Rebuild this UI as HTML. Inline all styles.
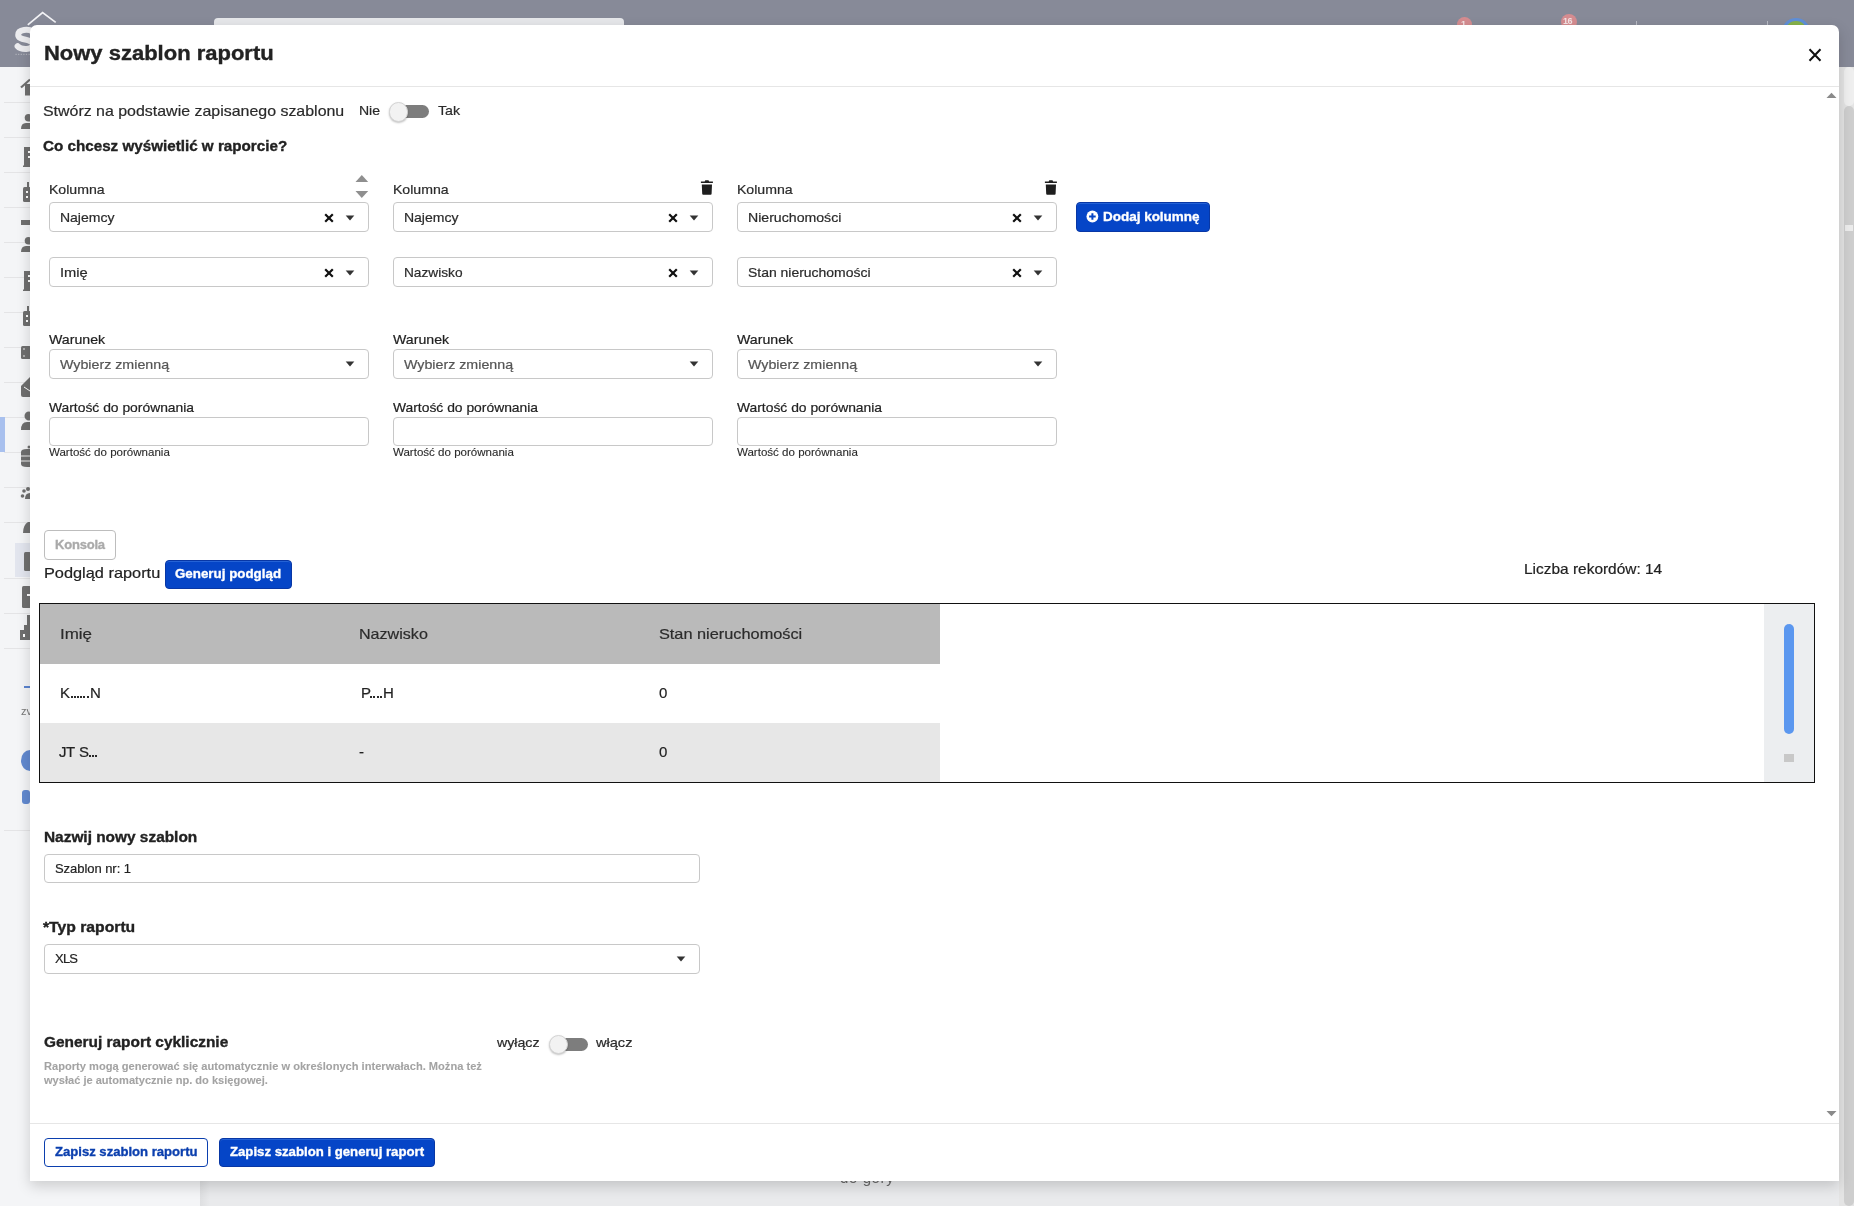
<!DOCTYPE html>
<html><head><meta charset="utf-8"><title>Nowy szablon raportu</title>
<style>
html,body{margin:0;padding:0;}
body{width:1854px;height:1206px;position:relative;overflow:hidden;background:#e7e8ea;font-family:"Liberation Sans",sans-serif;}
.a{position:absolute;box-sizing:border-box;}
.t{position:absolute;white-space:pre;font-family:"Liberation Sans",sans-serif;will-change:transform;}
.sel{position:absolute;box-sizing:border-box;border:1px solid #c9c9c9;border-radius:4px;background:#fff;}
.tri{position:absolute;width:0;height:0;border-left:4.5px solid transparent;border-right:4.5px solid transparent;border-top:5px solid #333;}
</style></head><body>
<div class="a" style="left:0px;top:0px;width:1854px;height:67px;background:#878a98"></div>
<div class="a" style="left:0px;top:67px;width:200px;height:1139px;background:#f4f5f7"></div>
<div class="a" style="left:200px;top:67px;width:1654px;height:1139px;background:#e9eaec"></div>
<div class="a" style="left:200px;top:67px;width:10px;height:1139px;background:linear-gradient(90deg,#dedfe1,#e9eaec)"></div>
<div class="a" style="left:214px;top:18px;width:410px;height:20px;background:#e6e7ea;border-radius:4px"></div>
<div class="a" style="left:1457px;top:17px;width:15px;height:15px;background:#d58c90;border-radius:50%"></div>
<div class="a" style="left:1561px;top:14px;width:16px;height:16px;background:#d58c90;border-radius:50%"></div>
<div class="t" style="left:1563px;top:17px;font-size:9px;line-height:9px;color:#f4e4e5;font-weight:700;letter-spacing:-0.5px">16</div>
<div class="t" style="left:1461px;top:20px;font-size:9px;line-height:9px;color:#f4e4e5;font-weight:700">1</div>
<div class="a" style="left:1636px;top:21px;width:1px;height:5px;background:#b9bbc4"></div>
<div class="a" style="left:1767px;top:21px;width:1px;height:5px;background:#b9bbc4"></div>
<div class="a" style="left:1782px;top:18px;width:28px;height:28px;background:#86b24a;border-radius:50%;border:3px solid #5f8fd8"></div>
<svg class="a" style="left:0;top:0" width="60" height="67"><path d="M27.8 24.8 L42.6 12.6 L55.7 22.4" stroke="#f3f3f6" stroke-width="1.7" fill="none"/><path d="M32.5 31.5 C29 29, 18.2 28.8, 18.2 35 C18.2 40.8, 32.8 38.6, 32.8 44.6 C32.8 50.2, 21 50, 17.6 46.2" stroke="#ececef" stroke-width="6" fill="none" stroke-linecap="round"/><path d="M15.5 54.3 H30" stroke="#d0d1d6" stroke-width="0.7" stroke-dasharray="1.2 1.4"/></svg>
<div class="a" style="left:4px;top:102px;width:26px;height:1px;background:#e4e4e6"></div>
<div class="a" style="left:4px;top:137px;width:26px;height:1px;background:#e4e4e6"></div>
<div class="a" style="left:4px;top:172px;width:26px;height:1px;background:#e4e4e6"></div>
<div class="a" style="left:4px;top:207px;width:26px;height:1px;background:#e4e4e6"></div>
<div class="a" style="left:4px;top:242px;width:26px;height:1px;background:#e4e4e6"></div>
<div class="a" style="left:4px;top:277px;width:26px;height:1px;background:#e4e4e6"></div>
<div class="a" style="left:4px;top:312px;width:26px;height:1px;background:#e4e4e6"></div>
<div class="a" style="left:4px;top:347px;width:26px;height:1px;background:#e4e4e6"></div>
<div class="a" style="left:4px;top:382px;width:26px;height:1px;background:#e4e4e6"></div>
<div class="a" style="left:4px;top:417px;width:26px;height:1px;background:#e4e4e6"></div>
<div class="a" style="left:4px;top:452px;width:26px;height:1px;background:#e4e4e6"></div>
<div class="a" style="left:4px;top:487px;width:26px;height:1px;background:#e4e4e6"></div>
<div class="a" style="left:4px;top:522px;width:26px;height:1px;background:#e4e4e6"></div>
<div class="a" style="left:4px;top:578px;width:26px;height:1px;background:#e4e4e6"></div>
<div class="a" style="left:4px;top:613px;width:26px;height:1px;background:#e4e4e6"></div>
<div class="a" style="left:4px;top:648px;width:26px;height:1px;background:#e4e4e6"></div>
<div class="a" style="left:4px;top:830px;width:26px;height:1px;background:#e4e4e6"></div>
<div class="a" style="left:0px;top:417px;width:5px;height:35px;background:#a8c0ee"></div>
<div class="a" style="left:15px;top:543px;width:15px;height:34px;background:#e2e5ee"></div>
<svg class="a" style="left:0;top:0" width="31" height="830"><path d="M21 87.5 L30 79.5" stroke="#6f6f6f" stroke-width="2.2"/><rect x="25" y="84" width="6" height="11.5" fill="#6f6f6f"/><circle cx="28.5" cy="117.8" r="3.8" fill="#6f6f6f"/><path d="M21 129 Q21 123 26 123 H31 V129 Z" fill="#6f6f6f"/><circle cx="28.5" cy="240.8" r="3.8" fill="#6f6f6f"/><path d="M21 252 Q21 246 26 246 H31 V252 Z" fill="#6f6f6f"/><path d="M23 167 V165.5 H24 V147 H31 V167 Z" fill="#6f6f6f"/><rect x="28" y="151" width="3" height="2" fill="#fff"/><rect x="28" y="156" width="3" height="2" fill="#fff"/><path d="M23 291 V289.5 H24 V271 H31 V291 Z" fill="#6f6f6f"/><rect x="28" y="275" width="3" height="2" fill="#fff"/><rect x="28" y="280" width="3" height="2" fill="#fff"/><rect x="23" y="187" width="8" height="15" rx="1.5" fill="#6f6f6f"/><rect x="27" y="182" width="2" height="5" fill="#6f6f6f"/><rect x="26" y="191" width="2" height="2" fill="#fff"/><rect x="26" y="196" width="2" height="2" fill="#fff"/><rect x="23" y="311" width="8" height="15" rx="1.5" fill="#6f6f6f"/><rect x="27" y="306" width="2" height="5" fill="#6f6f6f"/><rect x="26" y="315" width="2" height="2" fill="#fff"/><rect x="26" y="320" width="2" height="2" fill="#fff"/><rect x="21" y="220" width="10" height="5" fill="#6f6f6f"/><rect x="21" y="346" width="10" height="13" rx="1.5" fill="#6f6f6f"/><circle cx="24" cy="349" r="0.8" fill="#fff"/><circle cx="24" cy="356" r="0.8" fill="#fff"/><path d="M21 386 L30 377 V397 H23 Q21 397 21 395 Z" fill="#6f6f6f"/><path d="M24 387 L30 391" stroke="#fff" stroke-width="1"/><circle cx="29" cy="416" r="4.5" fill="#6f6f6f"/><path d="M21 430 Q21 422 27 422 H31 V430 Z" fill="#6f6f6f"/><path d="M21 452 Q21 449 27 449 H31 V467 H27 Q21 467 21 464 Z" fill="#6f6f6f"/><path d="M21 456 H31 M21 461 H31" stroke="#eee" stroke-width="1"/><circle cx="29" cy="447" r="1.5" fill="#6f6f6f"/><circle cx="24" cy="491" r="1.8" fill="#6f6f6f"/><circle cx="22.5" cy="496" r="1.8" fill="#6f6f6f"/><circle cx="28" cy="489" r="2" fill="#6f6f6f"/><path d="M25 499 Q25 493 30 493 V499 Z" fill="#6f6f6f"/><path d="M23 533 Q23 525 28 522 H31 V533 Z" fill="#6f6f6f"/><rect x="24" y="552" width="7" height="19" rx="1.5" fill="#6f6f6f"/><rect x="22" y="586" width="9" height="22" rx="1.5" fill="#6f6f6f"/><rect x="27" y="594" width="4" height="2" fill="#fff"/><path d="M20 640 V630 H24 V625 H27 V615 H31 V640 Z" fill="#6f6f6f"/><rect x="23" y="634" width="2" height="3" fill="#fff"/></svg>
<div class="a" style="left:24px;top:686px;width:6px;height:2px;background:#5b84d0"></div>
<div class="t" style="left:21px;top:706px;font-size:11px;line-height:11px;color:#777">zv</div>
<div class="a" style="left:21px;top:750px;width:18px;height:21px;background:#6189d0;border-radius:50%"></div>
<div class="a" style="left:22px;top:790px;width:8px;height:14px;background:#6189d0;border-radius:3px"></div>
<div class="t" style="left:840px;top:1170px;font-size:15px;line-height:15px;color:#6a6a6a;letter-spacing:0.6px">do góry</div>
<div class="a" style="left:1839px;top:67px;width:15px;height:1139px;background:#e4e4e4"></div>
<div class="a" style="left:1844px;top:67px;width:10px;height:39px;background:#efefef;border-radius:5px"></div>
<div class="a" style="left:1844px;top:106px;width:10px;height:1100px;background:#cecece;border-radius:5px"></div>
<div class="a" style="left:1845px;top:225px;width:8px;height:6px;background:#ececec"></div>
<div class="a" style="left:30px;top:25px;width:1809px;height:1156px;background:#fff;border-radius:7px 7px 0 0;box-shadow:0 5px 14px rgba(0,0,0,0.17)"></div>
<div class="a" style="left:30px;top:86px;width:1809px;height:1px;background:#e6e6e6"></div>
<div class="a" style="left:30px;top:1123px;width:1809px;height:1px;background:#e6e6e6"></div>
<svg class="a" style="left:1808px;top:48px" width="14" height="14"><path d="M1.5 1.3 L12.5 12.7 M12.5 1.3 L1.5 12.7" stroke="#111" stroke-width="2"/></svg>
<svg class="a" style="left:1826px;top:92px" width="11" height="7"><path d="M0.5 6 L5.5 0.8 L10.5 6 Z" fill="#8a8a8a"/></svg>
<svg class="a" style="left:1826px;top:1110px" width="11" height="7"><path d="M0.5 1 L5.5 6.2 L10.5 1 Z" fill="#8a8a8a"/></svg>
<div class="a" style="left:390px;top:105px;width:39px;height:13px;background:#7d7d7d;border-radius:6.5px"></div>
<div class="a" style="left:388.5px;top:102px;width:19.5px;height:19.5px;background:#f2f2f2;border:1px solid #d4d4d4;border-radius:50%;box-shadow:0 1px 2px rgba(0,0,0,0.25)"></div>
<div class="a" style="left:550px;top:1038px;width:38px;height:13px;background:#7d7d7d;border-radius:6.5px"></div>
<div class="a" style="left:548.5px;top:1034.5px;width:19.5px;height:19.5px;background:#f2f2f2;border:1px solid #d4d4d4;border-radius:50%;box-shadow:0 1px 2px rgba(0,0,0,0.25)"></div>
<svg class="a" style="left:355px;top:174px" width="14" height="25"><path d="M0.5 8 L6.8 1 L13.2 8 Z" fill="#8f8f8f"/><path d="M0.5 17 L6.8 24 L13.2 17 Z" fill="#8f8f8f"/></svg>
<svg class="a" style="left:700px;top:180px" width="14" height="16"><path d="M0.9 1.4 h3.8 l0.6 -1.1 h3.2 l0.6 1.1 h3.8 v1.7 h-12 Z" fill="#1e1e1e"/><path d="M1.8 4.4 h10.2 l-0.4 9.4 a1 1 0 0 1 -1 1 h-7.4 a1 1 0 0 1 -1 -1 Z" fill="#1e1e1e"/></svg>
<svg class="a" style="left:1044px;top:180px" width="14" height="16"><path d="M0.9 1.4 h3.8 l0.6 -1.1 h3.2 l0.6 1.1 h3.8 v1.7 h-12 Z" fill="#1e1e1e"/><path d="M1.8 4.4 h10.2 l-0.4 9.4 a1 1 0 0 1 -1 1 h-7.4 a1 1 0 0 1 -1 -1 Z" fill="#1e1e1e"/></svg>
<div class="a" style="left:49px;top:202px;width:320px;height:30px;border:1px solid #c8c8c8;border-radius:4px;background:#fff"></div>
<svg class="a" style="left:323.5px;top:212.5px" width="10" height="10"><path d="M1.2 1.2 L8.8 8.8 M8.8 1.2 L1.2 8.8" stroke="#111" stroke-width="2.2"/></svg>
<svg class="a" style="left:345px;top:214.5px" width="10" height="6"><path d="M0.7 0.5 L9.3 0.5 L5 5.5 Z" fill="#333"/></svg>
<div class="a" style="left:49px;top:257px;width:320px;height:30px;border:1px solid #c8c8c8;border-radius:4px;background:#fff"></div>
<svg class="a" style="left:323.5px;top:267.5px" width="10" height="10"><path d="M1.2 1.2 L8.8 8.8 M8.8 1.2 L1.2 8.8" stroke="#111" stroke-width="2.2"/></svg>
<svg class="a" style="left:345px;top:269.5px" width="10" height="6"><path d="M0.7 0.5 L9.3 0.5 L5 5.5 Z" fill="#333"/></svg>
<div class="a" style="left:49px;top:349px;width:320px;height:30px;border:1px solid #c8c8c8;border-radius:4px;background:#fff"></div>
<svg class="a" style="left:344.5px;top:361.3px" width="10" height="6"><path d="M0.7 0.5 L9.3 0.5 L5 5.5 Z" fill="#333"/></svg>
<div class="a" style="left:49px;top:417px;width:320px;height:29px;border:1px solid #c8c8c8;border-radius:4px;background:#fff"></div>
<div class="a" style="left:393px;top:202px;width:320px;height:30px;border:1px solid #c8c8c8;border-radius:4px;background:#fff"></div>
<svg class="a" style="left:667.5px;top:212.5px" width="10" height="10"><path d="M1.2 1.2 L8.8 8.8 M8.8 1.2 L1.2 8.8" stroke="#111" stroke-width="2.2"/></svg>
<svg class="a" style="left:689px;top:214.5px" width="10" height="6"><path d="M0.7 0.5 L9.3 0.5 L5 5.5 Z" fill="#333"/></svg>
<div class="a" style="left:393px;top:257px;width:320px;height:30px;border:1px solid #c8c8c8;border-radius:4px;background:#fff"></div>
<svg class="a" style="left:667.5px;top:267.5px" width="10" height="10"><path d="M1.2 1.2 L8.8 8.8 M8.8 1.2 L1.2 8.8" stroke="#111" stroke-width="2.2"/></svg>
<svg class="a" style="left:689px;top:269.5px" width="10" height="6"><path d="M0.7 0.5 L9.3 0.5 L5 5.5 Z" fill="#333"/></svg>
<div class="a" style="left:393px;top:349px;width:320px;height:30px;border:1px solid #c8c8c8;border-radius:4px;background:#fff"></div>
<svg class="a" style="left:688.5px;top:361.3px" width="10" height="6"><path d="M0.7 0.5 L9.3 0.5 L5 5.5 Z" fill="#333"/></svg>
<div class="a" style="left:393px;top:417px;width:320px;height:29px;border:1px solid #c8c8c8;border-radius:4px;background:#fff"></div>
<div class="a" style="left:737px;top:202px;width:320px;height:30px;border:1px solid #c8c8c8;border-radius:4px;background:#fff"></div>
<svg class="a" style="left:1011.5px;top:212.5px" width="10" height="10"><path d="M1.2 1.2 L8.8 8.8 M8.8 1.2 L1.2 8.8" stroke="#111" stroke-width="2.2"/></svg>
<svg class="a" style="left:1033px;top:214.5px" width="10" height="6"><path d="M0.7 0.5 L9.3 0.5 L5 5.5 Z" fill="#333"/></svg>
<div class="a" style="left:737px;top:257px;width:320px;height:30px;border:1px solid #c8c8c8;border-radius:4px;background:#fff"></div>
<svg class="a" style="left:1011.5px;top:267.5px" width="10" height="10"><path d="M1.2 1.2 L8.8 8.8 M8.8 1.2 L1.2 8.8" stroke="#111" stroke-width="2.2"/></svg>
<svg class="a" style="left:1033px;top:269.5px" width="10" height="6"><path d="M0.7 0.5 L9.3 0.5 L5 5.5 Z" fill="#333"/></svg>
<div class="a" style="left:737px;top:349px;width:320px;height:30px;border:1px solid #c8c8c8;border-radius:4px;background:#fff"></div>
<svg class="a" style="left:1032.5px;top:361.3px" width="10" height="6"><path d="M0.7 0.5 L9.3 0.5 L5 5.5 Z" fill="#333"/></svg>
<div class="a" style="left:737px;top:417px;width:320px;height:29px;border:1px solid #c8c8c8;border-radius:4px;background:#fff"></div>
<div class="a" style="left:1076px;top:202px;width:134px;height:30px;background:#0545c7;border:1px solid #0837a5;border-radius:4px;box-shadow:inset 0 1px 0 #2462d6"></div>
<svg class="a" style="left:1086px;top:210px" width="13" height="13"><circle cx="6.4" cy="6.5" r="5.9" fill="#fff"/><path d="M6.4 3.2 V9.8 M3.1 6.5 H9.7" stroke="#0545c5" stroke-width="2"/></svg>
<div class="a" style="left:44px;top:530px;width:72px;height:30px;border:1px solid #bdbdbd;border-radius:4px;background:#fff"></div>
<div class="a" style="left:165px;top:560px;width:127px;height:29px;background:#0545c7;border:1px solid #0837a5;border-radius:4px;box-shadow:inset 0 1px 0 #2462d6"></div>
<div class="a" style="left:39px;top:603px;width:1776px;height:180px;border:1px solid #111;background:#fff"></div>
<div class="a" style="left:40px;top:604px;width:900px;height:60px;background:#bababa"></div>
<div class="a" style="left:40px;top:723px;width:900px;height:59px;background:#e7e7e7"></div>
<div class="a" style="left:1764px;top:604px;width:50px;height:178px;background:#eceef0"></div>
<div class="a" style="left:1784px;top:624px;width:10px;height:110px;background:#5b97ef;border-radius:5px"></div>
<div class="a" style="left:1784px;top:754px;width:10px;height:8px;background:#c8c8c8"></div>
<div class="a" style="left:70.6px;top:695.8px;width:2.1px;height:2.1px;background:#2a2a2a"></div>
<div class="a" style="left:73.8px;top:695.8px;width:2.1px;height:2.1px;background:#2a2a2a"></div>
<div class="a" style="left:77.0px;top:695.8px;width:2.1px;height:2.1px;background:#2a2a2a"></div>
<div class="a" style="left:80.2px;top:695.8px;width:2.1px;height:2.1px;background:#2a2a2a"></div>
<div class="a" style="left:83.4px;top:695.8px;width:2.1px;height:2.1px;background:#2a2a2a"></div>
<div class="a" style="left:86.6px;top:695.8px;width:2.1px;height:2.1px;background:#2a2a2a"></div>
<div class="a" style="left:370.3px;top:695.8px;width:2.1px;height:2.1px;background:#2a2a2a"></div>
<div class="a" style="left:373.4px;top:695.8px;width:2.1px;height:2.1px;background:#2a2a2a"></div>
<div class="a" style="left:376.5px;top:695.8px;width:2.1px;height:2.1px;background:#2a2a2a"></div>
<div class="a" style="left:379.6px;top:695.8px;width:2.1px;height:2.1px;background:#2a2a2a"></div>
<div class="a" style="left:88.6px;top:754.5999999999999px;width:2.1px;height:2.1px;background:#2a2a2a"></div>
<div class="a" style="left:91.7px;top:754.5999999999999px;width:2.1px;height:2.1px;background:#2a2a2a"></div>
<div class="a" style="left:94.8px;top:754.5999999999999px;width:2.1px;height:2.1px;background:#2a2a2a"></div>
<div class="a" style="left:44px;top:854px;width:656px;height:29px;border:1px solid #c8c8c8;border-radius:4px;background:#fff"></div>
<div class="a" style="left:44px;top:944px;width:656px;height:30px;border:1px solid #c8c8c8;border-radius:4px;background:#fff"></div>
<svg class="a" style="left:675.5px;top:955.8px" width="10" height="6"><path d="M0.7 0.5 L9.3 0.5 L5 5.5 Z" fill="#333"/></svg>
<div class="a" style="left:44px;top:1138px;width:164px;height:29px;border:1px solid #0b3fae;border-radius:4px;background:#fff"></div>
<div class="a" style="left:219px;top:1138px;width:216px;height:29px;background:#0545c7;border:1px solid #0837a5;border-radius:4px;box-shadow:inset 0 1px 0 #2462d6"></div>
<div class="t" style="left:43.8px;top:43.4px;font-size:20px;line-height:20px;font-weight:700;color:#222;letter-spacing:0.00px;-webkit-text-stroke:0.35px #222;transform:scaleX(1.0998);transform-origin:0.80px 0;">Nowy szablon raportu</div>
<div class="t" style="left:43.4px;top:102.8px;font-size:15px;line-height:15px;font-weight:400;color:#2a2a2a;letter-spacing:0.00px;-webkit-text-stroke:0.2px #2a2a2a;transform:scaleX(1.0626);transform-origin:0.60px 0;">Stwórz na podstawie zapisanego szablonu</div>
<div class="t" style="left:358.5px;top:104.3px;font-size:13px;line-height:13px;font-weight:400;color:#2b2b2b;letter-spacing:0.00px;-webkit-text-stroke:0.2px #2b2b2b;transform:scaleX(1.0825);transform-origin:0.52px 0;">Nie</div>
<div class="t" style="left:437.5px;top:104.3px;font-size:13px;line-height:13px;font-weight:400;color:#2b2b2b;letter-spacing:0.00px;-webkit-text-stroke:0.2px #2b2b2b;transform:scaleX(1.0941);transform-origin:0.52px 0;">Tak</div>
<div class="t" style="left:43.4px;top:138.0px;font-size:15px;line-height:15px;font-weight:700;color:#222;letter-spacing:0.00px;-webkit-text-stroke:0.35px #222;transform:scaleX(1.0136);transform-origin:0.60px 0;">Co chcesz wyświetlić w raporcie?</div>
<div class="t" style="left:48.9px;top:183.0px;font-size:13px;line-height:13px;font-weight:400;color:#2b2b2b;letter-spacing:0.00px;-webkit-text-stroke:0.2px #2b2b2b;transform:scaleX(1.0861);transform-origin:0.52px 0;">Kolumna</div>
<div class="t" style="left:392.9px;top:183.0px;font-size:13px;line-height:13px;font-weight:400;color:#2b2b2b;letter-spacing:0.00px;-webkit-text-stroke:0.2px #2b2b2b;transform:scaleX(1.0861);transform-origin:0.52px 0;">Kolumna</div>
<div class="t" style="left:736.9px;top:183.0px;font-size:13px;line-height:13px;font-weight:400;color:#2b2b2b;letter-spacing:0.00px;-webkit-text-stroke:0.2px #2b2b2b;transform:scaleX(1.0861);transform-origin:0.52px 0;">Kolumna</div>
<div class="t" style="left:59.8px;top:211.0px;font-size:13px;line-height:13px;font-weight:400;color:#2b2b2b;letter-spacing:0.00px;-webkit-text-stroke:0.2px #2b2b2b;transform:scaleX(1.0780);transform-origin:0.52px 0;">Najemcy</div>
<div class="t" style="left:403.8px;top:211.0px;font-size:13px;line-height:13px;font-weight:400;color:#2b2b2b;letter-spacing:0.00px;-webkit-text-stroke:0.2px #2b2b2b;transform:scaleX(1.0780);transform-origin:0.52px 0;">Najemcy</div>
<div class="t" style="left:747.8px;top:211.0px;font-size:13px;line-height:13px;font-weight:400;color:#2b2b2b;letter-spacing:0.00px;-webkit-text-stroke:0.2px #2b2b2b;transform:scaleX(1.0866);transform-origin:0.52px 0;">Nieruchomości</div>
<div class="t" style="left:59.7px;top:266.1px;font-size:13px;line-height:13px;font-weight:400;color:#2b2b2b;letter-spacing:0.00px;-webkit-text-stroke:0.2px #2b2b2b;transform:scaleX(1.1308);transform-origin:0.52px 0;">Imię</div>
<div class="t" style="left:403.7px;top:266.1px;font-size:13px;line-height:13px;font-weight:400;color:#2b2b2b;letter-spacing:0.00px;-webkit-text-stroke:0.2px #2b2b2b;transform:scaleX(1.0534);transform-origin:0.52px 0;">Nazwisko</div>
<div class="t" style="left:747.7px;top:266.1px;font-size:13px;line-height:13px;font-weight:400;color:#2b2b2b;letter-spacing:0.00px;-webkit-text-stroke:0.2px #2b2b2b;transform:scaleX(1.0740);transform-origin:0.52px 0;">Stan nieruchomości</div>
<div class="t" style="left:49.0px;top:332.8px;font-size:13px;line-height:13px;font-weight:400;color:#222;letter-spacing:0.00px;-webkit-text-stroke:0.2px #222;transform:scaleX(1.0890);transform-origin:0.52px 0;">Warunek</div>
<div class="t" style="left:60.0px;top:357.6px;font-size:13px;line-height:13px;font-weight:400;color:#555;letter-spacing:0.00px;-webkit-text-stroke:0.2px #555;transform:scaleX(1.0958);transform-origin:0.52px 0;">Wybierz zmienną</div>
<div class="t" style="left:49.0px;top:400.7px;font-size:13px;line-height:13px;font-weight:400;color:#222;letter-spacing:0.00px;-webkit-text-stroke:0.2px #222;transform:scaleX(1.0662);transform-origin:0.52px 0;">Wartość do porównania</div>
<div class="t" style="left:49.1px;top:447.8px;font-size:10px;line-height:10px;font-weight:400;color:#2b2b2b;letter-spacing:0.00px;-webkit-text-stroke:0.1px #2b2b2b;transform:scaleX(1.1551);transform-origin:0.40px 0;">Wartość do porównania</div>
<div class="t" style="left:393.0px;top:332.8px;font-size:13px;line-height:13px;font-weight:400;color:#222;letter-spacing:0.00px;-webkit-text-stroke:0.2px #222;transform:scaleX(1.0890);transform-origin:0.52px 0;">Warunek</div>
<div class="t" style="left:404.0px;top:357.6px;font-size:13px;line-height:13px;font-weight:400;color:#555;letter-spacing:0.00px;-webkit-text-stroke:0.2px #555;transform:scaleX(1.0958);transform-origin:0.52px 0;">Wybierz zmienną</div>
<div class="t" style="left:393.0px;top:400.7px;font-size:13px;line-height:13px;font-weight:400;color:#222;letter-spacing:0.00px;-webkit-text-stroke:0.2px #222;transform:scaleX(1.0662);transform-origin:0.52px 0;">Wartość do porównania</div>
<div class="t" style="left:393.1px;top:447.8px;font-size:10px;line-height:10px;font-weight:400;color:#2b2b2b;letter-spacing:0.00px;-webkit-text-stroke:0.1px #2b2b2b;transform:scaleX(1.1551);transform-origin:0.40px 0;">Wartość do porównania</div>
<div class="t" style="left:737.0px;top:332.8px;font-size:13px;line-height:13px;font-weight:400;color:#222;letter-spacing:0.00px;-webkit-text-stroke:0.2px #222;transform:scaleX(1.0890);transform-origin:0.52px 0;">Warunek</div>
<div class="t" style="left:748.0px;top:357.6px;font-size:13px;line-height:13px;font-weight:400;color:#555;letter-spacing:0.00px;-webkit-text-stroke:0.2px #555;transform:scaleX(1.0958);transform-origin:0.52px 0;">Wybierz zmienną</div>
<div class="t" style="left:737.0px;top:400.7px;font-size:13px;line-height:13px;font-weight:400;color:#222;letter-spacing:0.00px;-webkit-text-stroke:0.2px #222;transform:scaleX(1.0662);transform-origin:0.52px 0;">Wartość do porównania</div>
<div class="t" style="left:737.1px;top:447.8px;font-size:10px;line-height:10px;font-weight:400;color:#2b2b2b;letter-spacing:0.00px;-webkit-text-stroke:0.1px #2b2b2b;transform:scaleX(1.1551);transform-origin:0.40px 0;">Wartość do porównania</div>
<div class="t" style="left:55.0px;top:538.2px;font-size:13px;line-height:13px;font-weight:700;color:#aaa;letter-spacing:-0.21px;-webkit-text-stroke:0.35px #aaa;">Konsola</div>
<div class="t" style="left:44.2px;top:565.4px;font-size:15px;line-height:15px;font-weight:400;color:#222;letter-spacing:0.00px;-webkit-text-stroke:0.2px #222;transform:scaleX(1.0895);transform-origin:0.60px 0;">Podgląd raportu</div>
<div class="t" style="left:175.0px;top:567.1px;font-size:13px;line-height:13px;font-weight:700;color:#fff;letter-spacing:-0.00px;-webkit-text-stroke:0.35px #fff;transform:scaleX(1.0268);transform-origin:0.52px 0;">Generuj podgląd</div>
<div class="t" style="left:1524.1px;top:561.3px;font-size:15px;line-height:15px;font-weight:400;color:#222;letter-spacing:-0.00px;-webkit-text-stroke:0.2px #222;transform:scaleX(1.0297);transform-origin:0.60px 0;">Liczba rekordów: 14</div>
<div class="t" style="left:59.8px;top:625.7px;font-size:15px;line-height:15px;font-weight:400;color:#2b2b2b;letter-spacing:0.00px;-webkit-text-stroke:0.2px #2b2b2b;transform:scaleX(1.1310);transform-origin:0.60px 0;">Imię</div>
<div class="t" style="left:359.4px;top:625.7px;font-size:15px;line-height:15px;font-weight:400;color:#2b2b2b;letter-spacing:0.00px;-webkit-text-stroke:0.2px #2b2b2b;transform:scaleX(1.0732);transform-origin:0.60px 0;">Nazwisko</div>
<div class="t" style="left:659.4px;top:625.7px;font-size:15px;line-height:15px;font-weight:400;color:#2b2b2b;letter-spacing:0.00px;-webkit-text-stroke:0.2px #2b2b2b;transform:scaleX(1.0878);transform-origin:0.60px 0;">Stan nieruchomości</div>
<div class="t" style="left:60.4px;top:685.3px;font-size:15px;line-height:15px;font-weight:400;color:#222;letter-spacing:-0.02px;-webkit-text-stroke:0.2px #222;">K</div>
<div class="t" style="left:90.0px;top:685.3px;font-size:15px;line-height:15px;font-weight:400;color:#222;letter-spacing:-0.84px;-webkit-text-stroke:0.2px #222;">N</div>
<div class="t" style="left:360.5px;top:685.3px;font-size:15px;line-height:15px;font-weight:400;color:#222;letter-spacing:-0.62px;-webkit-text-stroke:0.2px #222;">P</div>
<div class="t" style="left:383.3px;top:685.3px;font-size:15px;line-height:15px;font-weight:400;color:#222;letter-spacing:-1.04px;-webkit-text-stroke:0.2px #222;">H</div>
<div class="t" style="left:659.4px;top:685.3px;font-size:15px;line-height:15px;font-weight:400;color:#222;letter-spacing:1.86px;-webkit-text-stroke:0.2px #222;">0</div>
<div class="t" style="left:59.4px;top:744.1px;font-size:15px;line-height:15px;font-weight:400;color:#222;letter-spacing:-0.47px;-webkit-text-stroke:0.2px #222;">JT</div>
<div class="t" style="left:79.1px;top:744.1px;font-size:15px;line-height:15px;font-weight:400;color:#222;letter-spacing:-1.12px;-webkit-text-stroke:0.2px #222;">S</div>
<div class="t" style="left:359.4px;top:744.1px;font-size:15px;line-height:15px;font-weight:400;color:#222;letter-spacing:1.20px;-webkit-text-stroke:0.2px #222;">-</div>
<div class="t" style="left:659.4px;top:744.1px;font-size:15px;line-height:15px;font-weight:400;color:#222;letter-spacing:1.86px;-webkit-text-stroke:0.2px #222;">0</div>
<div class="t" style="left:43.9px;top:829.4px;font-size:15px;line-height:15px;font-weight:700;color:#222;letter-spacing:0.00px;-webkit-text-stroke:0.35px #222;transform:scaleX(1.0271);transform-origin:0.60px 0;">Nazwij nowy szablon</div>
<div class="t" style="left:54.7px;top:862.4px;font-size:13px;line-height:13px;font-weight:400;color:#222;letter-spacing:-0.05px;-webkit-text-stroke:0.2px #222;">Szablon nr: 1</div>
<div class="t" style="left:43.4px;top:919.1px;font-size:15px;line-height:15px;font-weight:700;color:#222;letter-spacing:0.00px;-webkit-text-stroke:0.35px #222;transform:scaleX(1.0476);transform-origin:0.60px 0;">*Typ raportu</div>
<div class="t" style="left:54.7px;top:951.7px;font-size:13px;line-height:13px;font-weight:400;color:#222;letter-spacing:-0.77px;-webkit-text-stroke:0.2px #222;">XLS</div>
<div class="t" style="left:43.8px;top:1034.3px;font-size:15px;line-height:15px;font-weight:700;color:#222;letter-spacing:0.00px;-webkit-text-stroke:0.35px #222;transform:scaleX(1.0279);transform-origin:0.60px 0;">Generuj raport cyklicznie</div>
<div class="t" style="left:44.0px;top:1060.9px;font-size:11px;line-height:11px;font-weight:700;color:#a3a3a3;letter-spacing:0.00px;-webkit-text-stroke:0.08px #a3a3a3;transform:scaleX(1.0089);transform-origin:0.44px 0;">Raporty mogą generować się automatycznie w określonych interwałach. Można też</div>
<div class="t" style="left:44.0px;top:1075.1px;font-size:11px;line-height:11px;font-weight:700;color:#a3a3a3;letter-spacing:0.00px;-webkit-text-stroke:0.08px #a3a3a3;transform:scaleX(1.0062);transform-origin:0.44px 0;">wysłać je automatycznie np. do księgowej.</div>
<div class="t" style="left:496.5px;top:1036.0px;font-size:13px;line-height:13px;font-weight:400;color:#2b2b2b;letter-spacing:0.00px;-webkit-text-stroke:0.2px #2b2b2b;transform:scaleX(1.0928);transform-origin:0.52px 0;">wyłącz</div>
<div class="t" style="left:595.9px;top:1036.0px;font-size:13px;line-height:13px;font-weight:400;color:#2b2b2b;letter-spacing:0.00px;-webkit-text-stroke:0.2px #2b2b2b;transform:scaleX(1.1247);transform-origin:0.52px 0;">włącz</div>
<div class="t" style="left:55.0px;top:1145.4px;font-size:13px;line-height:13px;font-weight:700;color:#0b3fae;letter-spacing:0.00px;-webkit-text-stroke:0.35px #0b3fae;transform:scaleX(1.0068);transform-origin:0.52px 0;">Zapisz szablon raportu</div>
<div class="t" style="left:229.7px;top:1145.4px;font-size:13px;line-height:13px;font-weight:700;color:#fff;letter-spacing:0.00px;-webkit-text-stroke:0.35px #fff;transform:scaleX(1.0138);transform-origin:0.52px 0;">Zapisz szablon i generuj raport</div>
<div class="t" style="left:1102.5px;top:209.8px;font-size:13px;line-height:13px;font-weight:700;color:#fff;letter-spacing:-0.00px;-webkit-text-stroke:0.35px #fff;transform:scaleX(1.0364);transform-origin:0.52px 0;">Dodaj kolumnę</div>
</body></html>
